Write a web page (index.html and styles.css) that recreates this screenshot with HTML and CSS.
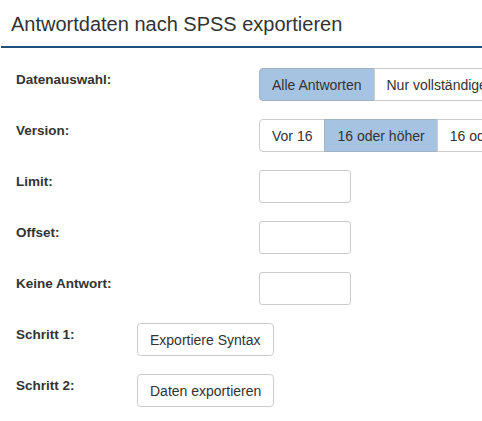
FILE: index.html
```html
<!DOCTYPE html>
<html lang="de">
<head>
<meta charset="utf-8">
<title>SPSS Export</title>
<link rel="stylesheet" href="styles.css">
</head>
<body>

<h2 class="page-title">Antwortdaten nach SPSS exportieren</h2>

<form class="export-form">
	<div class="form-row">
		<label class="row-label">Datenauswahl:</label>
		<div class="btn-group">
			<button type="button" class="btn active">Alle Antworten</button>
			<button type="button" class="btn">Nur vollständige Antworten</button>
			<button type="button" class="btn">Nur unvollständige Antworten</button>
		</div>
	</div>
	<div class="form-row">
		<label class="row-label">Version:</label>
		<div class="btn-group">
			<button type="button" class="btn">Vor 16</button>
			<button type="button" class="btn active">16 oder höher</button>
			<button type="button" class="btn">16 oder höher (Unicode)</button>
		</div>
	</div>
	<div class="form-row">
		<label class="row-label" for="limit">Limit:</label>
		<input type="text" class="text-input" id="limit">
	</div>
	<div class="form-row">
		<label class="row-label" for="offset">Offset:</label>
		<input type="text" class="text-input" id="offset">
	</div>
	<div class="form-row">
		<label class="row-label" for="noanswer">Keine Antwort:</label>
		<input type="text" class="text-input" id="noanswer">
	</div>
	<div class="form-row step">
		<label class="row-label">Schritt 1:</label>
		<button type="button" class="btn single">Exportiere Syntax</button>
	</div>
	<div class="form-row step">
		<label class="row-label">Schritt 2:</label>
		<button type="button" class="btn single">Daten exportieren</button>
	</div>
</form>

</body>
</html>
```

FILE: styles.css
```css
body {
	margin: 0;
	font-family: "Liberation Sans", Arial, sans-serif;
	color: #333;
	overflow: hidden;
}

.page-title {
	margin: 0 0 0 1px;
	padding: 12px 0 10px 10px;
	font-size: 20px;
	font-weight: normal;
	line-height: 24px;
	color: #333;
	border-bottom: 2px solid #1f4e7d;
}

.export-form {
	padding: 20px 0 0 16px;
}

.form-row {
	display: flex;
	align-items: flex-start;
	height: 33px;
	margin-bottom: 18px;
	white-space: nowrap;
}

.row-label {
	flex: 0 0 243px;
	padding-top: 4px;
	font-size: 13.5px;
	font-weight: bold;
	line-height: 16px;
}

.step .row-label {
	flex-basis: 121px;
}

.btn-group {
	display: flex;
}

.btn {
	height: 33px;
	padding: 0 12px;
	font-family: inherit;
	font-size: 14px;
	color: #333;
	background: #fff;
	border: 1px solid #ccc;
	margin-left: -1px;
}

.btn-group .btn:first-child {
	margin-left: 0;
	border-radius: 4px 0 0 4px;
}

.btn.active {
	background: #a6c3e2;
	border-color: #a2b3c5;
}

.btn.single {
	margin-left: 0;
	border-radius: 4px;
}

.text-input {
	width: 92px;
	height: 33px;
	box-sizing: border-box;
	border: 1px solid #ccc;
	border-radius: 3px;
	margin: 0;
}
```
